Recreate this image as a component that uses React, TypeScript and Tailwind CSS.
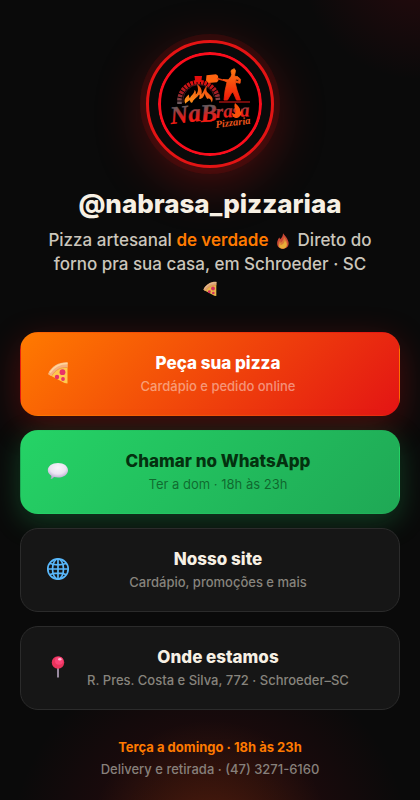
import React from 'react'

const Logo: React.FC = () => (
  <svg viewBox="0 0 104 104" className="block size-full rounded-full" role="img" aria-label="Na Brasa Pizzaria">
    <defs>
      <linearGradient id="brand" x1="0" y1="0" x2="0" y2="1">
        <stop offset="0.25" stopColor="#6a5a5d" />
        <stop offset="0.55" stopColor="#d02424" />
        <stop offset="0.85" stopColor="#ff1a10" />
      </linearGradient>
      <linearGradient id="chef" x1="0" y1="0" x2="0" y2="1">
        <stop offset="0" stopColor="#ff7a12" />
        <stop offset="1" stopColor="#f01808" />
      </linearGradient>
      <linearGradient id="arch" x1="0" y1="1" x2="0" y2="0">
        <stop offset="0" stopColor="#6a5f63" />
        <stop offset="0.5" stopColor="#a01c24" />
        <stop offset="1" stopColor="#e01010" />
      </linearGradient>
      <linearGradient id="ember" x1="0" y1="1" x2="1" y2="0">
        <stop offset="0" stopColor="#ff9a1c" />
        <stop offset="1" stopColor="#f03a0c" />
      </linearGradient>
    </defs>
    <circle cx="52" cy="52" r="50.5" fill="#000" stroke="#fb0d1c" strokeWidth="3" />

    {/* Oven */}
    <path d="M21.500 52V47A19.500 19.500 0 0 1 59.500 44L60 48" fill="none" stroke="url(#arch)" strokeWidth="4.600" strokeDasharray="2.600 0.900" />
    <path d="M25 51V47A16 16 0 0 1 56.500 45" fill="none" stroke="#4a2024" strokeWidth="0.900" />
    <path d="M36.500 24h7.500l-.7 6h-6z" fill="#e30d0d" />
    <g transform="translate(-6 -7) scale(1.15)">
      <path d="M29 51c-2-4 1-6 3-8 .5 1.500 0 2.500 1 3 2-3 4-4 4-7 1 1 1.500 2 1 4 3-2 2-6 1-9 3 2 5 5 4 9 2-2 2-5 5-8-1 4-1 5 1 7 3 3 5 4 3 8-1-3-2-4-4-3-1-2-2-3-2-5-1 3-2 5-5 5 0-2 1-3 0-4-2 3-5 4-6 7-1 1-2-1-2-2-2 1-3 2-4 3z" fill="url(#ember)" />
    </g>

    {/* Pizzaiolo with the peel */}
    <path d="M48.500 23.300l9.500-1 2 1.400.5 4.500-1.500 2-8.500.8-2.500-2.600z" fill="#ff6410" />
    <path d="M59 26.500l13 3.500" stroke="#e7410f" strokeWidth="1.300" />
    <path
      d="M73 19l1-1.500 1 .5 1-1.500 1.500 2-.5 3-.6 2.500 3.600.8 2.500 2.500-.4 4-4.100-.8v-1.500l2.500.2.300-1.400-2.800-.7-.5 5 1.500 6 3.500 10h-4l-3.500-8-1.500 1-4 7h-3.500l1-9 2-9-4-2.500 5.300.2 2.700-3.200.7-2z"
      fill="url(#chef)"
      stroke="url(#chef)"
      strokeWidth="0.800"
    />
    <path d="M61 50h31" stroke="#e61818" strokeWidth="1.200" />

    <g fontFamily="'Liberation Serif', serif" fontStyle="italic" fontWeight="700">
      <g fill="url(#brand)" stroke="url(#brand)">
        <text x="13" y="72" fontSize="25" strokeWidth="0.400" transform="rotate(-6 13 72)">Na</text>
        <text x="43" y="70" fontSize="25" strokeWidth="0.400" transform="rotate(-4 43 70)">B</text>
        <text x="58" y="66" fontSize="19" strokeWidth="0.200" transform="rotate(-3 58 66)">rasa</text>
      </g>
      <text x="58" y="76" fontSize="10.500" fill="#ed551c" transform="rotate(-7 58 76)">Pizzaria</text>
    </g>
    <path d="M77 51c3 3 6 5 5 9 2-1 1-3 1-4 2 4 0 9-4 10-3 0-5-2-5-5l3 1c2-4-2-6 0-11z" fill="#f95109" />
  </svg>
)

const Pizza: React.FC<{ className: string }> = ({ className }) => (
  <svg viewBox="0 0 22 24" className={className} aria-hidden="true">
    <path d="M1.500 13.500C1 12 4 7.500 9 4.500 14 1.500 19 1 20.500 1.600V22.500L17.500 22z" fill="#ffc94f" />
    <path d="M1.500 12C5 5 12 1 20.500 1.300V6C13 5.500 8 9 4.500 15 2 14 .8 13 1.500 12z" fill="#f6b181" />
    <path d="M3 11.500C7 5.500 13 2.400 20.500 2.500" fill="none" stroke="#ffd79c" strokeWidth="1.500" />
    <path d="M5 14.500C8 9.500 13 6 20.500 6.500" fill="none" stroke="#eb914f" strokeWidth="0.800" />
    <g fill="#e93269">
      <circle cx="15.500" cy="11.200" r="2.900" />
      <circle cx="10" cy="16" r="2.200" />
      <circle cx="16" cy="18" r="1.900" />
    </g>
  </svg>
)

const Fire: React.FC = () => (
  <svg viewBox="0 0 14 18" className="mx-1 inline-block h-4 w-3 align-[-3px]" aria-hidden="true">
    <path d="M7 0C9 3 12 5 13 9c2 5-1 9-6 9S-.5 15 .3 10C1 8 1.500 6 3 5l.5 2C6 5 7 3 7 0z" fill="#c94835" />
    <path d="M8 4c2 3 4 5 4 8 0 4-2 6-5 6-4 0-6-2-5-6 0-2 1-3 2-4v3C7 9 8 7 8 4z" fill="#da7937" />
    <path d="M9 8c2 3 3 5 2 7-1 3-6 4-8 1-1-2 0-4 1-5v3c3-1 5-3 5-6z" fill="#e8ae38" />
  </svg>
)

const Speech: React.FC = () => (
  <svg viewBox="0 0 22 18" className="h-[18px] w-[22px]" aria-hidden="true">
    <defs>
      <radialGradient id="bubble" cx="0.500" cy="0.300" r="0.650">
        <stop offset="0" stopColor="#f8f5fb" />
        <stop offset="0.600" stopColor="#ebe4f2" />
        <stop offset="1" stopColor="#b9a8cf" />
      </radialGradient>
    </defs>
    <path d="M11 1c6 0 10 3.200 10 7.200S17 15.500 11 15.500c-1.500 0-2.800-.2-4-.5-1 1.300-2 2-3.500 2 .9-1 1-2 .8-3.300C2.200 12.300.8 10.500.8 8.200.8 4.200 5 1 11 1z" fill="url(#bubble)" />
  </svg>
)

const Globe: React.FC = () => (
  <svg viewBox="0 0 24 24" className="size-6" fill="none" stroke="#59b8fb" strokeWidth="1.700" aria-hidden="true">
    <circle cx="12" cy="12" r="10.200" />
    <ellipse cx="12" cy="12" rx="5.500" ry="10" />
    <path d="M12 2v20M2 12h20M4 6.500c5 1.600 11 1.600 16 0M4 17.500c5-1.600 11-1.600 16 0" />
  </svg>
)

const Pin: React.FC = () => (
  <svg viewBox="0 0 14 24" className="h-6 w-[14px]" aria-hidden="true">
    <path d="M7 12v10.500" stroke="#988a9f" strokeWidth="2" />
    <circle cx="7" cy="7.500" r="6.200" fill="#e9345c" />
    <circle cx="8" cy="5.700" r="4" fill="#fa4478" />
    <ellipse cx="8.800" cy="4.300" rx="1.700" ry="1.300" fill="#ffb8ce" />
  </svg>
)

const links = [
  {
    title: 'Peça sua pizza',
    text: 'Cardápio e pedido online',
    icon: <Pizza className="h-6 w-[22px]" />,
    card: 'border-transparent bg-[linear-gradient(135deg,#ff7a00,#e31414)] shadow-[0_10px_34px_rgba(227,20,20,0.3)] text-white',
    sub: 'font-medium text-white/45',
  },
  {
    title: 'Chamar no WhatsApp',
    text: 'Ter a dom · 18h às 23h',
    icon: <Speech />,
    card: 'border-transparent bg-[linear-gradient(135deg,#25d366,#1fa855)] shadow-[0_8px_28px_rgba(37,211,102,0.25)] text-[#04310f]',
    sub: 'text-[#04310f]/60',
  },
  {
    title: 'Nosso site',
    text: 'Cardápio, promoções e mais',
    icon: <Globe />,
    card: 'border-[#2b2b2b] bg-[#161616] text-[#f7f0e4]',
    sub: 'font-medium text-[#87847d]',
  },
  {
    title: 'Onde estamos',
    text: 'R. Pres. Costa e Silva, 772 · Schroeder–SC',
    icon: <Pin />,
    card: 'border-[#2b2b2b] bg-[#161616] text-[#f7f0e4]',
    sub: 'font-medium text-[#87847d]',
  },
]

const App: React.FC = () => (
  <div className="min-h-screen bg-[#0a0a0a] bg-[radial-gradient(circle_at_50%_840px,rgba(255,122,0,0.17),rgba(255,122,0,0)_120px),radial-gradient(circle_at_50%_850px,rgba(200,10,30,0.2),rgba(200,10,30,0)_200px),radial-gradient(circle_at_100%_-40px,rgba(200,10,30,0.16),rgba(200,10,30,0)_120px)] font-['Inter',sans-serif] text-[#f7f0e4]">
    <main className="mx-auto flex max-w-[480px] flex-col items-center px-5 pt-10 pb-4">
      <div className="size-32 rounded-full border-3 border-[#e31414] bg-[#0a0a0a] p-[9px] shadow-[0_0_0_6px_rgba(227,20,20,0.12),0_12px_50px_rgba(227,20,20,0.35)]">
        <Logo />
      </div>

      <h1 className="mt-4 text-[26px] leading-10 font-extrabold">@nabrasa_pizzariaa</h1>
      <p className="mt-1 text-center text-[17px] leading-6 font-medium text-[#cbc6bc]">
        Pizza artesanal <strong className="font-semibold text-[#ff7a00]">de verdade</strong> <Fire /> Direto do
        <br />
        forno pra sua casa, em Schroeder · SC
        <br />
        <Pizza className="inline-block h-4 w-4 align-[-3px] opacity-90" />
      </p>

      <nav className="mt-8 flex w-full flex-col gap-3.5">
        {links.map((link) => (
          <a
            key={link.title}
            href="#"
            className={`flex h-[84px] items-center gap-3 rounded-[18px] border pr-[50px] pl-5 ${link.card}`}
          >
            <span className="flex w-[34px] shrink-0 justify-center pb-0.5">{link.icon}</span>
            <span className="min-w-0 flex-1 text-center">
              <span className="block text-[17px] leading-6 font-extrabold">{link.title}</span>
              <span className={`block text-[13px] leading-[22px] whitespace-nowrap ${link.sub}`}>{link.text}</span>
            </span>
          </a>
        ))}
      </nav>

      <footer className="mt-[26px] text-center text-[13px] leading-[22px] font-medium text-[#87807b]">
        <p className="font-bold text-[#ff7a00]">Terça a domingo · 18h às 23h</p>
        <p>Delivery e retirada · (47) 3271-6160</p>
      </footer>
    </main>
  </div>
)

export default App
